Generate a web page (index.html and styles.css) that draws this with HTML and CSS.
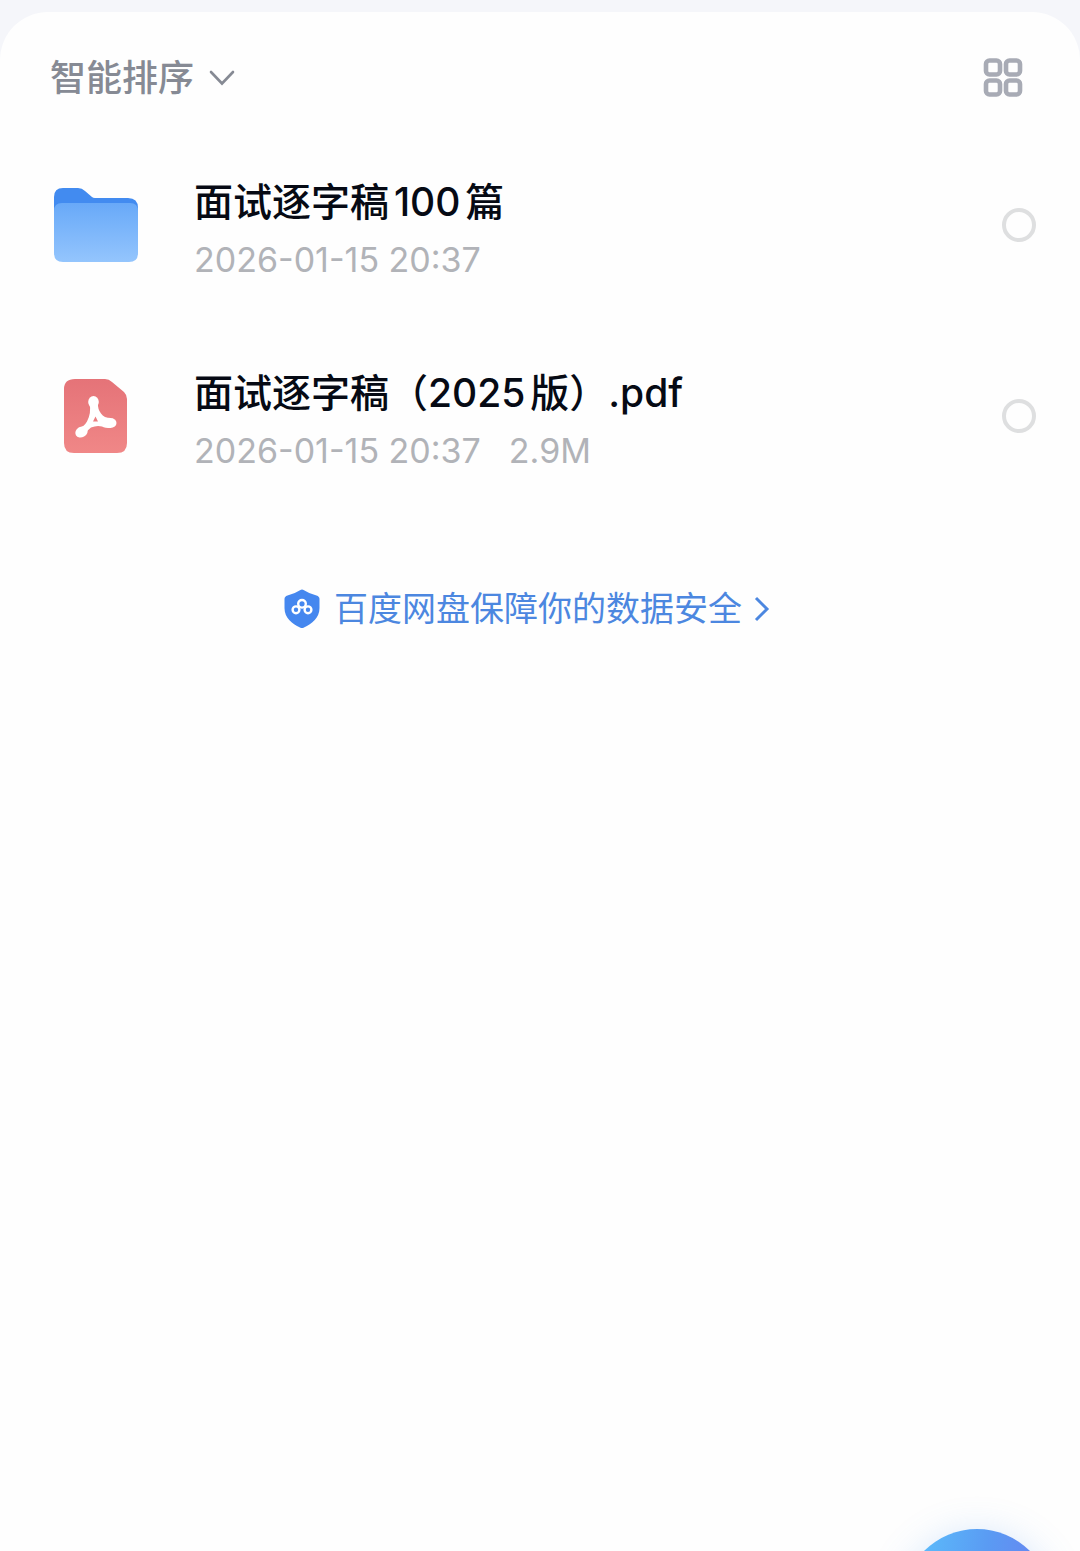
FILE: index.html
```html
<!DOCTYPE html>
<html lang="zh-CN">
<head>
  <meta charset="UTF-8" />
  <meta name="viewport" content="width=device-width, initial-scale=1" />
  <title>百度网盘</title>
  <link rel="stylesheet" href="styles.css">
</head>
<body>
  <main class="panel">
    <header class="toolbar">
      <button type="button" class="sort">
        智能排序
        <svg class="sort-arrow" viewBox="0 0 26 16" aria-hidden="true">
          <path stroke-width="2.600" d="M2 2l11 11.500L24 2" />
        </svg>
      </button>
      <button type="button" class="view-toggle" aria-label="网格视图">
        <svg class="grid-icon" viewBox="0 0 40 40" aria-hidden="true">
          <g stroke-width="4.600">
            <rect x="3" y="2.500" width="14" height="14" rx="3.500" />
            <rect x="23" y="2.500" width="14" height="14" rx="3.500" />
            <rect x="3" y="22.500" width="14" height="14" rx="3.500" />
            <rect x="23" y="22.500" width="14" height="14" rx="3.500" />
          </g>
        </svg>
      </button>
    </header>

    <ul class="files">
      <li class="file">
        <svg class="file-icon" viewBox="0 0 84 74" aria-hidden="true">
          <defs>
            <linearGradient id="folder" x1="0" y1="0" x2="0" y2="1">
              <stop offset="0" stop-color="#68a9f8" />
              <stop offset="1" stop-color="#94c5fd" />
            </linearGradient>
          </defs>
          <path fill="#428bf0" d="M0 9Q0 0 9 0H24Q28 0 31 3L38 9Q39 10 41 10H74Q84 10 84 20V40H0Z" />
          <path fill="url(#folder)" d="M0 23Q0 15 8 15H76Q84 15 84 23V65Q84 74 75 74H9Q0 74 0 65Z" />
        </svg>
        <label class="file-info" for="file-1">
          <span class="file-name">面试逐字稿100篇</span>
          <span class="file-meta"><span>2026-01-15 20:37</span></span>
        </label>
        <input class="check" type="checkbox" id="file-1">
      </li>
      <li class="file">
        <svg class="file-icon" viewBox="0 0 84 74" aria-hidden="true">
          <defs>
            <linearGradient id="pdf" x1="0" y1="0" x2="0" y2="1">
              <stop offset="0" stop-color="#e57378" />
              <stop offset="1" stop-color="#f08787" />
            </linearGradient>
          </defs>
          <path fill="url(#pdf)" d="M21 0H51Q55 0 58 3L70 13Q73 16 73 20V64Q73 74 63 74H20Q10 74 10 64V10Q10 0 21 0Z" />
          <g fill="#fff">
            <ellipse cx="39.500" cy="23" rx="5.300" ry="6" />
            <ellipse cx="56.500" cy="44" rx="6" ry="5" />
            <ellipse cx="27.500" cy="53" rx="6.500" ry="5.200" transform="rotate(-30 27.500 53)" />
            <path fill-rule="evenodd" d="M35.500 24H44Q43.500 30 47 34.500Q50 39 57 39V49Q51 49 48 47.500Q43 46 37 48.500Q33 51 31 56L24 49Q30 48 33 42.500Q37.500 34 35.500 24ZM41.500 37.500L39 42.500H44Z" />
          </g>
        </svg>
        <label class="file-info" for="file-2">
          <span class="file-name">面试逐字稿（2025版）.pdf</span>
          <span class="file-meta"><span>2026-01-15 20:37</span><span>2.9M</span></span>
        </label>
        <input class="check" type="checkbox" id="file-2">
      </li>
    </ul>

    <a class="security" href="#">
      <svg class="shield" viewBox="0 0 36 40" aria-hidden="true">
        <path fill="#4587ef" d="M16 1.200Q18 0 20 1.200Q26 5 32.500 6.500Q35.500 7.500 35.500 10V19C35.500 29 28 34.500 20 38.500Q18 39.500 16 38.500C8 34.500 .5 29 .5 19V10Q.5 7.500 3.500 6.500Q10 5 16 1.200Z" />
        <g fill="none" stroke="#fff" stroke-width="2.400">
          <circle cx="18" cy="14.800" r="3.800" />
          <circle cx="12" cy="20.800" r="3.400" />
          <circle cx="24" cy="20.800" r="3.400" />
        </g>
      </svg>
      <span class="security-text">百度网盘保障你的数据安全</span>
      <svg class="security-arrow" viewBox="0 0 16 26" aria-hidden="true">
        <path d="M2 2l11 11L2 24" />
      </svg>
    </a>
  </main>

  <button type="button" class="fab" aria-label="添加"></button>
</body>
</html>
```

FILE: styles.css
```css
* {
  box-sizing: border-box;
}

body {
  margin: 0;
  padding-top: 12px;
  min-height: 100vh;
  display: flex;
  flex-direction: column;
  background-color: #f5f6fa;
  font-family: Inter, "Noto Sans CJK SC", sans-serif;
}

button {
  padding: 0;
  border: none;
  background: none;
  font-family: inherit;
  cursor: pointer;
}

svg {
  flex-shrink: 0;
}

.panel {
  flex: 1;
  background-color: #fefefe;
  border-radius: 48px 48px 0 0;
}

.toolbar {
  display: flex;
  align-items: center;
  justify-content: space-between;
  height: 117px;
  padding: 14px 57px 0 50px;
}

.sort {
  display: flex;
  align-items: center;
  gap: 15px;
  color: #868a94;
  font-size: 36px;
  font-weight: 500;
  line-height: 48px;
}

.sort-arrow {
  width: 26px;
  height: 16px;
  fill: none;
  stroke: #868a94;
  stroke-linecap: round;
}

.view-toggle {
  display: flex;
}

.grid-icon {
  width: 40px;
  height: 40px;
  fill: none;
  stroke: #a8abb5;
}

.files {
  margin: 0;
  padding: 0;
  list-style: none;
}

.file {
  display: flex;
  align-items: center;
  height: 191px;
  padding: 0 44px 0 54px;
}

.file-icon {
  width: 84px;
  height: 74px;
}

.file-info {
  flex: 1;
  display: flex;
  flex-direction: column;
  gap: 10px;
  margin-left: 56px;
  padding-top: 8px;
}

.file-name {
  color: #060a14;
  font-size: 39px;
  font-weight: 500;
  line-height: 52px;
  text-autospace: normal;
}

.file-meta {
  display: flex;
  gap: 28px;
  color: #b1b3b8;
  font-size: 34px;
  line-height: 44px;
}

.check {
  appearance: none;
  width: 34px;
  height: 34px;
  margin: 0;
  border: 4px solid #dedfe0;
  border-radius: 50%;
}

.check:checked {
  border-color: #4587ef;
  background-color: #4587ef;
}

.security {
  display: flex;
  align-items: center;
  justify-content: center;
  margin-top: 74px;
  padding-right: 26px;
  color: #4c87e0;
  font-size: 34px;
  line-height: 48px;
  text-decoration: none;
}

.security-text {
  margin: 0 12px 0 14px;
}

.shield {
  width: 36px;
  height: 40px;
}

.security-arrow {
  width: 16px;
  height: 26px;
  fill: none;
  stroke: #4c87e0;
  stroke-width: 3;
}

/* sits mostly below the bottom edge */
.fab {
  position: fixed;
  right: 28px;
  bottom: -128px;
  width: 150px;
  height: 150px;
  border-radius: 50%;
  background: linear-gradient(100deg, #5bbcfb 10%, #5a9bf3 50%, #6a80f0 90%);
  box-shadow: 0 4px 36px rgba(90, 160, 245, 0.25);
}
```
